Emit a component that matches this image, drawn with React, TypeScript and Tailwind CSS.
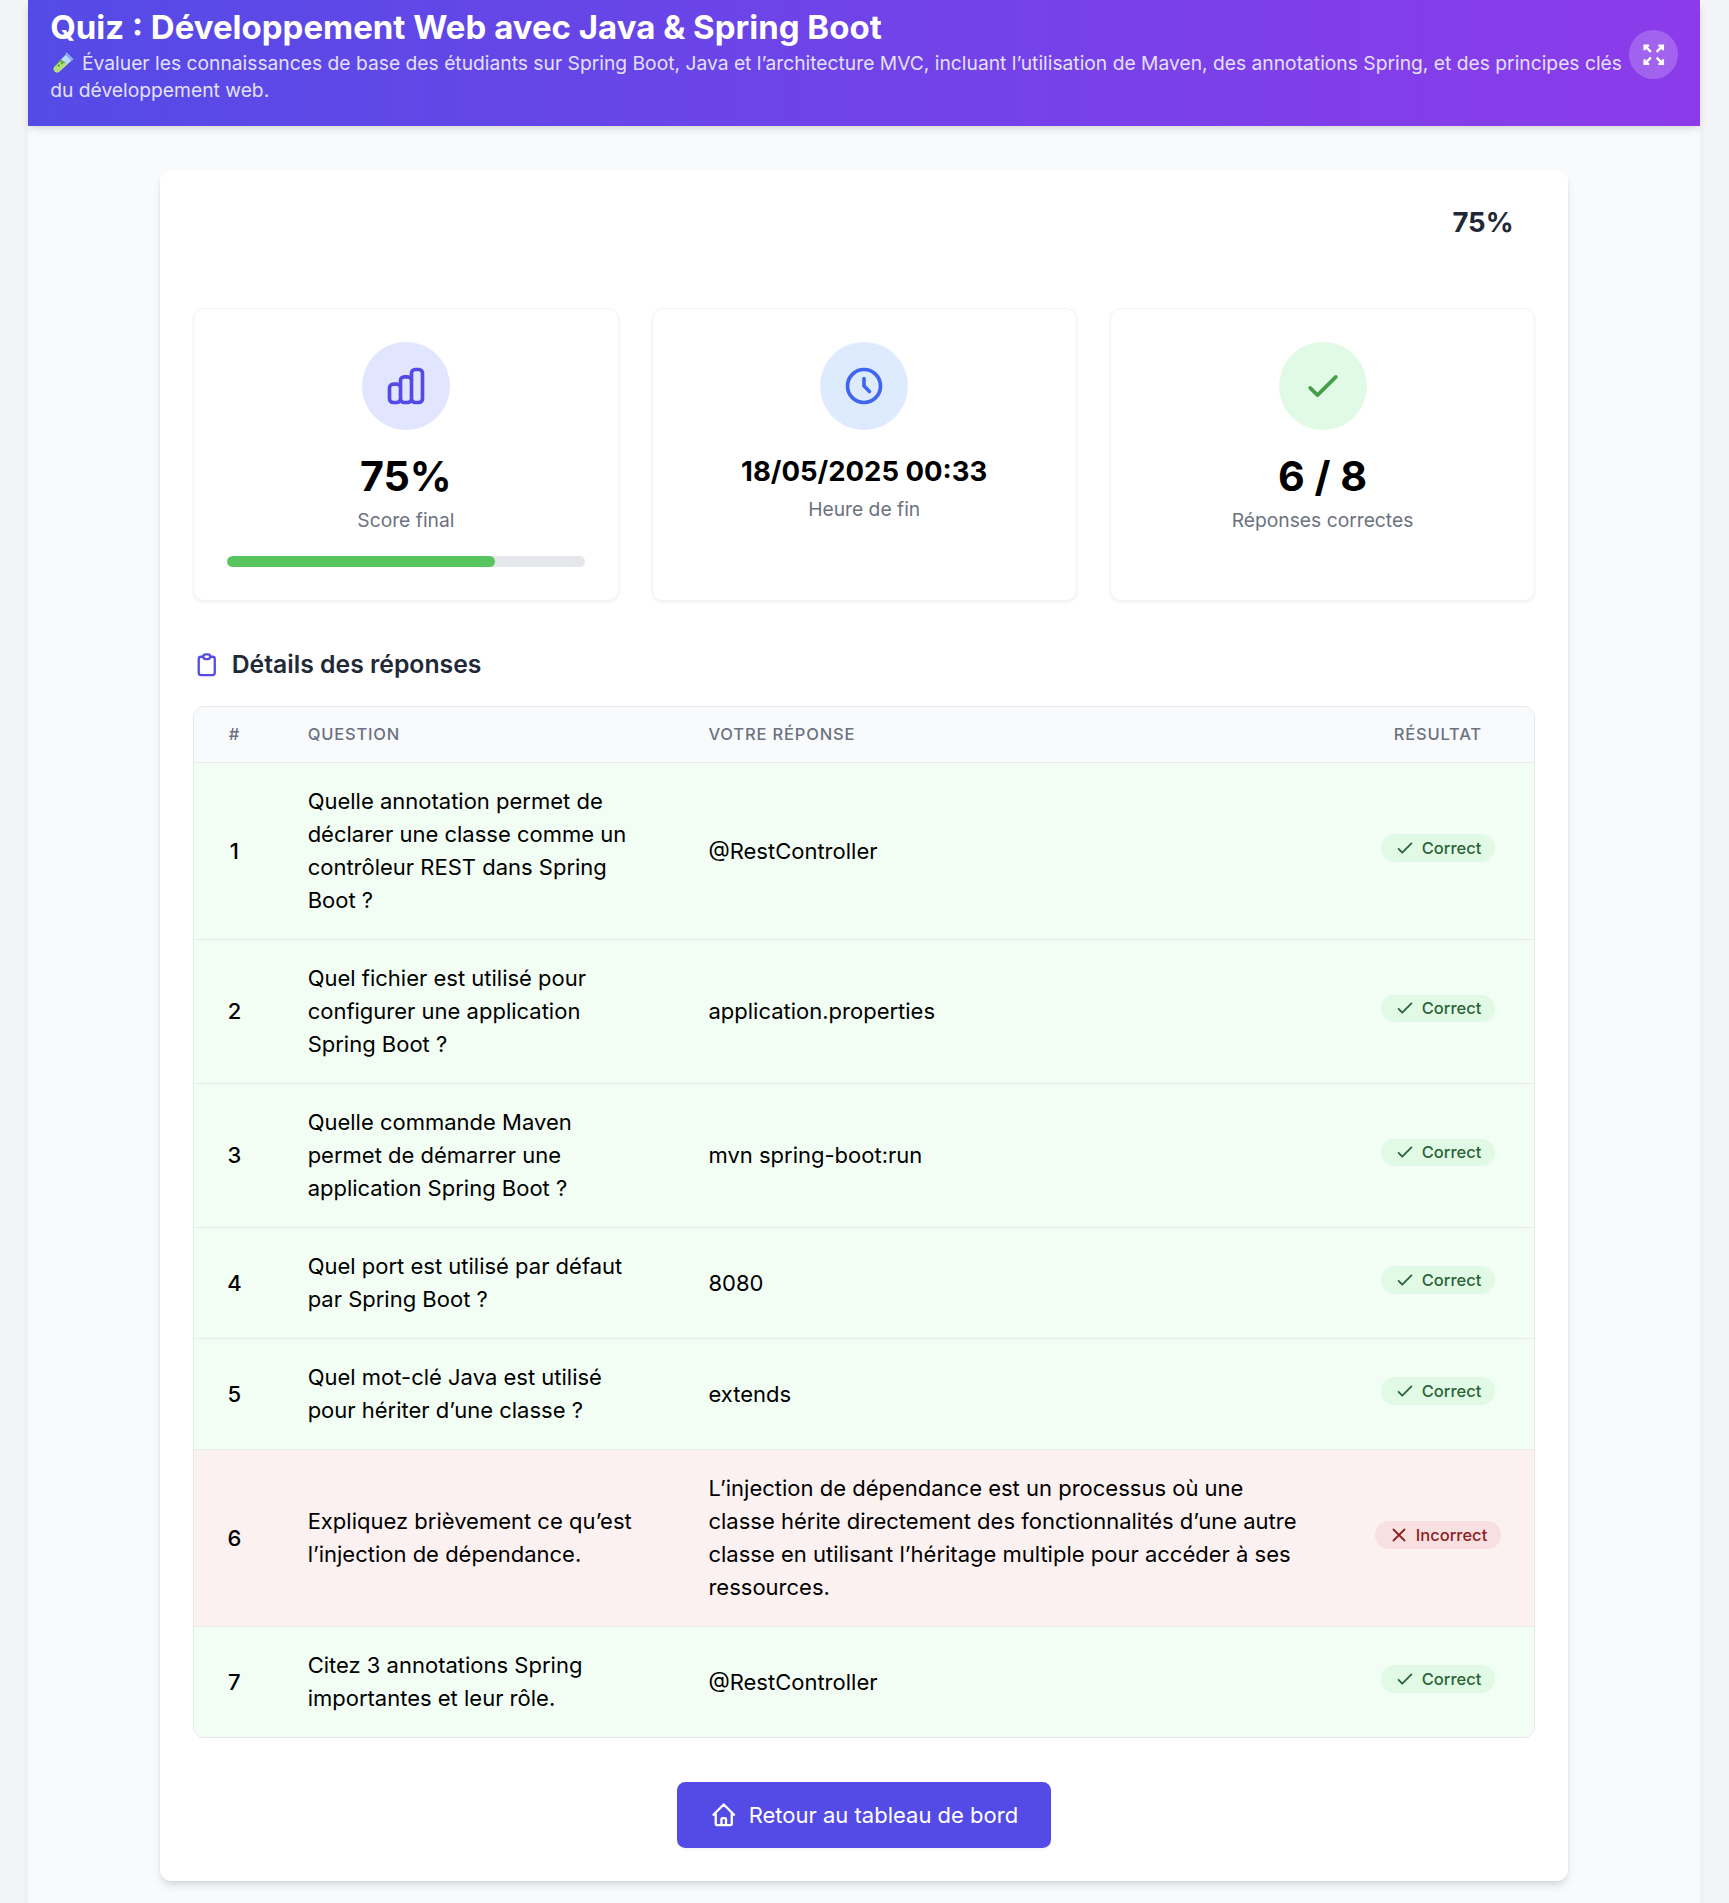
import type { ReactNode } from "react";

function Stroke({ d, className, sharp }: { d: string; className: string; sharp?: boolean }) {
  return (
    <svg
      className={className}
      fill="none"
      viewBox="0 0 24 24"
      stroke="currentColor"
      strokeWidth={2}
      strokeLinecap={sharp ? "butt" : "round"}
      strokeLinejoin={sharp ? "miter" : "round"}
    >
      <path d={d} />
    </svg>
  );
}

const CHECK = "M5 13l4 4L19 7";
const CROSS = "M6 18L18 6M6 6l12 12";
const CLOCK = "M12 8v4l3 3m6-3a9 9 0 11-18 0 9 9 0 0118 0z";
const CHART =
  "M9 19v-6a2 2 0 00-2-2H5a2 2 0 00-2 2v6a2 2 0 002 2h2a2 2 0 002-2zm0 0V9a2 2 0 012-2h2a2 2 0 012 2v10m-6 0a2 2 0 002 2h2a2 2 0 002-2m0 0V5a2 2 0 012-2h2a2 2 0 012 2v14a2 2 0 01-2 2h-2a2 2 0 01-2-2z";
const CLIPBOARD =
  "M9 5H7a2 2 0 00-2 2v12a2 2 0 002 2h10a2 2 0 002-2V7a2 2 0 00-2-2h-2M9 5a2 2 0 002 2h2a2 2 0 002-2M9 5a2 2 0 012-2h2a2 2 0 012 2";
const HOME =
  "M3 12l2-2m0 0l7-7 7 7M5 10v10a1 1 0 001 1h3m10-11l2 2m-2-2v10a1 1 0 01-1 1h-3m-6 0a1 1 0 001-1v-4a1 1 0 011-1h2a1 1 0 011 1v4a1 1 0 001 1m-6 0h6";
const EXPAND = "M4 8V4H8M4 4l5.5 5.5M20 8V4H16M20 4l-5.5 5.5M4 16v4H8M4 20l5.5-5.5M20 16v4H16M20 20l-5.5-5.5";

function TestTube() {
  return (
    <svg viewBox="0 0 26 24" className="inline-block h-[17.45px] w-[19.2px] align-[-3.5px]">
      <path d="M15.5 4.5L21.5 10.5L9.2 21.6C7.6 22.9 5.5 22.7 4.3 21.3C3 19.9 3.1 18 4.5 16.6Z" fill="#b5dcf5" />
      <path d="M10.2 10.6L17 14.6L9.2 21.6C7.6 22.9 5.5 22.7 4.3 21.3C3 19.9 3.1 18 4.5 16.6Z" fill="#b3e07c" />
      <path d="M10.2 9.6L15.4 12.4L13.6 13.6L9.8 11.8L5.4 16.2L4.5 16.6Z" fill="#6aa83c" />
      <path d="M15.2 3.6L16.6 2.6L23.2 9.2L22 10.6Z" fill="#8fbcf6" />
      <circle cx="8.6" cy="15.6" r="1.1" fill="#4f8f35" />
      <circle cx="11.6" cy="13.4" r="0.9" fill="#4f8f35" />
    </svg>
  );
}

function StatCard({ tone, icon, children, label, bar }: { tone: string; icon: string; children: ReactNode; label: string; bar?: number }) {
  return (
    <div className="rounded-lg border border-[#f3f4f6] bg-white p-6 text-center shadow-xs">
      <div className={`mx-auto mb-4 flex h-16 w-16 items-center justify-center rounded-full ${tone}`}>
        <Stroke d={icon} className="h-8 w-8" />
      </div>
      {children}
      <div className="mt-1 text-sm text-[#6b7280]">{label}</div>
      {bar !== undefined && (
        <div className="mt-4 h-2 w-full overflow-hidden rounded-full bg-[#e5e7eb]">
          <div className="h-2 rounded-full bg-[#57c45e]" style={{ width: `${bar}%` }} />
        </div>
      )}
    </div>
  );
}

const rows = [
  { q: "Quelle annotation permet de déclarer une classe comme un contrôleur REST dans Spring Boot ?", a: "@RestController", ok: true },
  { q: "Quel fichier est utilisé pour configurer une application Spring Boot ?", a: "application.properties", ok: true },
  { q: "Quelle commande Maven permet de démarrer une application Spring Boot ?", a: "mvn spring-boot:run", ok: true },
  { q: "Quel port est utilisé par défaut par Spring Boot ?", a: "8080", ok: true },
  { q: "Quel mot-clé Java est utilisé pour hériter d’une classe ?", a: "extends", ok: true },
  {
    q: "Expliquez brièvement ce qu’est l’injection de dépendance.",
    a: "L’injection de dépendance est un processus où une classe hérite directement des fonctionnalités d’une autre classe en utilisant l’héritage multiple pour accéder à ses ressources.",
    ok: false,
  },
  { q: "Citez 3 annotations Spring importantes et leur rôle.", a: "@RestController", ok: true },
];

function Badge({ ok }: { ok: boolean }) {
  return (
    <span
      className={`inline-flex items-center rounded-full px-2.5 py-0.5 text-xs font-medium ${
        ok ? "bg-[#e1fae5] text-[#2b6438]" : "bg-[#f8e0e1] text-[#8c2022]"
      }`}
    >
      <Stroke d={ok ? CHECK : CROSS} className="mr-1 h-4 w-4" />
      {ok ? "Correct" : "Incorrect"}
    </span>
  );
}

export default function App() {
  return (
    <div className="h-screen w-full overflow-hidden bg-[#f3f4f6] font-['Inter',sans-serif] text-black">
      <div className="[zoom:1.375]">
        <div className="ml-[20.5px] w-[1216px] bg-[#f9fafc] pb-12 shadow-[0_4px_6px_rgba(0,0,0,0.04)]">
          <header className="flex items-center justify-between bg-linear-to-r/srgb from-[#544be6] to-[#8c3bea] px-4 pt-[3.64px] pb-[16.2px] text-white shadow-md">
            <div>
              <h1 className="text-2xl font-bold">Quiz : Développement Web avec Java &amp; Spring Boot</h1>
              <p className="pt-[0.4px] text-sm text-[#e3e0fb] -mb-[0.4px]">
                <TestTube /> Évaluer les connaissances de base des étudiants sur Spring Boot, Java et l’architecture MVC, incluant
                l’utilisation de Maven, des annotations Spring, et des principes clés du développement web.
              </p>
            </div>
            <button className="shrink-0 rounded-full bg-white/20 p-2" aria-label="Plein écran">
              <Stroke d={EXPAND} className="h-5 w-5" sharp />
            </button>
          </header>

          <main className="mx-auto mt-8 w-5xl rounded-lg bg-white p-6 shadow-md">
            <div className="mb-12 pr-[15.7px] text-right text-xl font-bold text-[#1f2937]">75%</div>

            <div className="mb-8 grid grid-cols-3 gap-6">
              <StatCard tone="bg-[#e1e6fe] text-[#544be6]" icon={CHART} label="Score final" bar={75}>
                <div className="text-3xl font-bold">75%</div>
              </StatCard>
              <StatCard tone="bg-[#deeafe] text-[#3f66ee]" icon={CLOCK} label="Heure de fin">
                <div className="text-xl font-bold">18/05/2025 00:33</div>
              </StatCard>
              <StatCard tone="bg-[#e1fae5] text-[#459f4a]" icon={CHECK} label="Réponses correctes">
                <div className="text-3xl font-bold">6 / 8</div>
              </StatCard>
            </div>

            <h2 className="mb-4 flex items-center text-lg font-semibold text-[#1f2937]">
              <Stroke d={CLIPBOARD} className="mr-2 h-5 w-5 text-[#544be6]" />
              Détails des réponses
            </h2>

            <div className="overflow-hidden rounded-lg border border-[#e5e7eb]">
              <table className="w-full table-fixed">
                <thead className="bg-[#f9fafc]">
                  <tr className="text-left text-xs tracking-wider text-[#6b7280] uppercase">
                    <th className="w-[58.5px] px-0 py-3 text-center font-medium">#</th>
                    <th className="w-[291.5px] px-6 py-3 font-medium">Question</th>
                    <th className="px-6 py-3 font-medium">Votre réponse</th>
                    <th className="w-[140.2px] px-6 py-3 text-center font-medium">Résultat</th>
                  </tr>
                </thead>
                <tbody>
                  {rows.map((r, i) => (
                    <tr key={i} className={`border-t border-[#e9ecef] ${r.ok ? "bg-[#f2fdf4]" : "bg-[#fcf1f1]"}`}>
                      <td className="px-0 pt-[16.3px] pb-[15.7px] text-center font-medium">{i + 1}</td>
                      <td className="px-6 py-4">{r.q}</td>
                      <td className="px-6 pt-[16.3px] pb-[15.7px]">{r.a}</td>
                      <td className="px-0 pt-[16.1px] pb-[15.9px] text-center">
                        <Badge ok={r.ok} />
                      </td>
                    </tr>
                  ))}
                </tbody>
              </table>
            </div>

            <div className="mt-8 flex justify-center">
              <button className="flex items-center rounded-md bg-[#544be6] px-6 pt-[12.3px] pb-[11.7px] text-white shadow-xs">
                <Stroke d={HOME} className="mr-2 h-5 w-5" />
                Retour au tableau de bord
              </button>
            </div>
          </main>
        </div>
      </div>
    </div>
  );
}
